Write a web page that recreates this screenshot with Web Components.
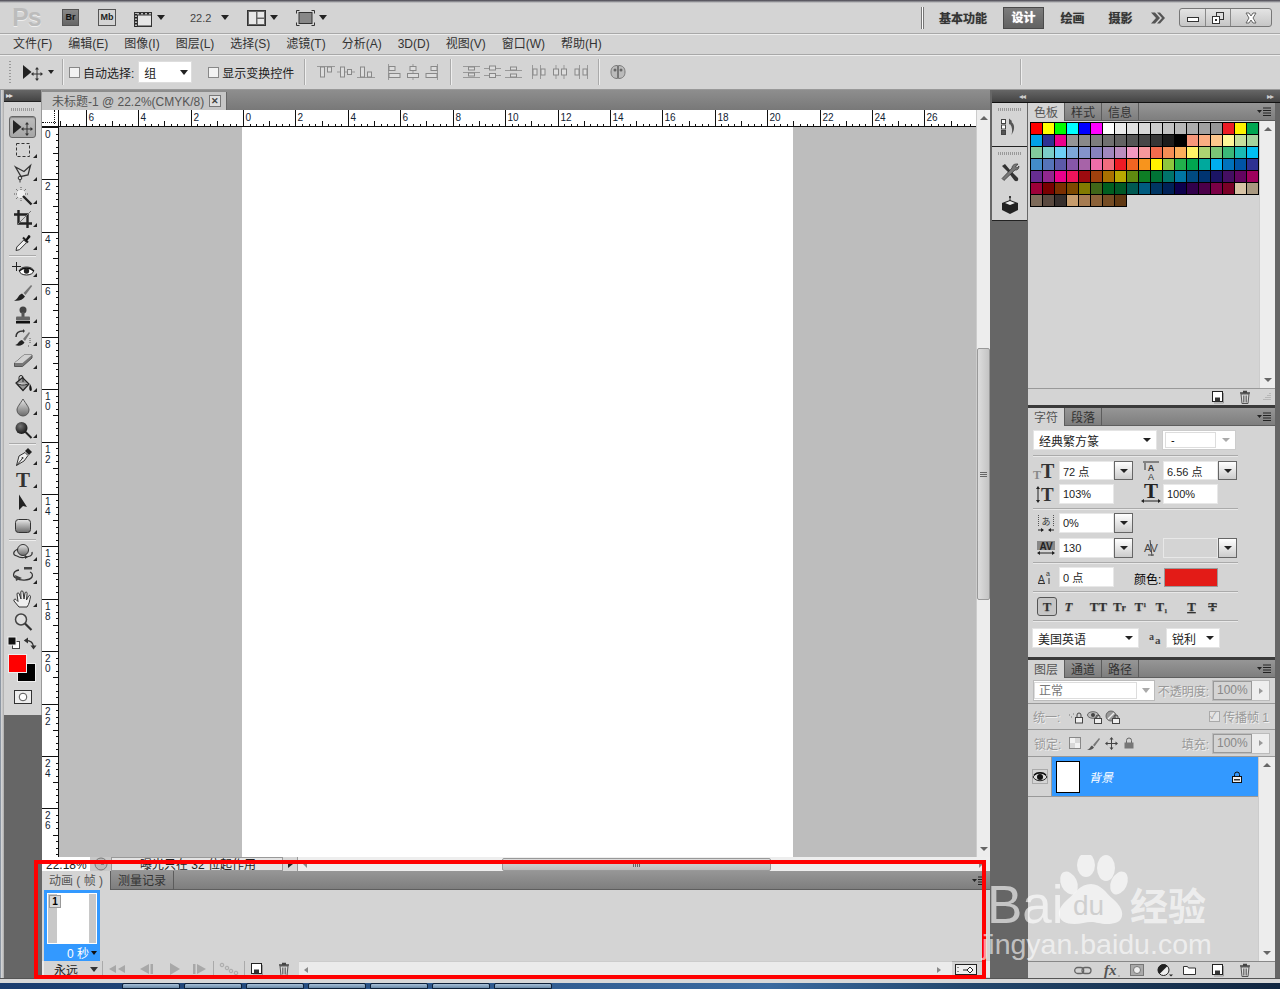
<!DOCTYPE html>
<html lang="zh"><head><meta charset="utf-8"><title>Photoshop</title>
<style>html,body{margin:0;padding:0;background:#d4d4d4}</style></head>
<body><ps-app></ps-app>
<script>
const S='fill="none" stroke="#333"';
const G='<defs><linearGradient id="g" x1="0" y1="0" x2="0" y2="1"><stop offset="0" stop-color="#e8e8e8"/><stop offset="1" stop-color="#6a6a6a"/></linearGradient><radialGradient id="d" cx=".4" cy=".35" r=".7"><stop offset="0" stop-color="#777"/><stop offset="1" stop-color="#111"/></radialGradient></defs>';
const AL='fill="#ddd" stroke="#888"';
const icons={
move:[24,16,'<path d="M2 1v14l8.500-7z" fill="#222"/><path d="M11 10h10M16 5v10" stroke="#333"/><path d="M16 3l2 2.500h-4zM16 17l2-2.500h-4zM10 10l2.500-2v4zM22 10l-2.500-2v4z" fill="#333"/>'],
marquee:[20,20,'<rect x="3.500" y="3.500" width="13" height="13" fill="none" stroke="#333" stroke-dasharray="3 2"/>'],
lasso:[20,20,`<path d="M2.500 4L11 8.500 17.500 2.500 15 12 8 13.500z" ${S} stroke-width="1.300"/><circle cx="7" cy="15" r="1.800" ${S}/><path d="M7 16.500v3" stroke="#333"/>`],
wand:[20,20,'<circle cx="8" cy="8" r="4" fill="#eee"/><path d="M8 1v3M8 12v3M1 8h3M12 8h3M3 3l2 2M13 3l-2 2M3 13l2-2" stroke="#555" stroke-dasharray="1 1"/><path d="M10 10l8.500 8.500" stroke="#222" stroke-width="2.400"/>'],
crop:[20,20,'<path d="M5.500 1v13.500H19M1 5.500h13.500V19" fill="none" stroke="#222" stroke-width="2.400"/><path d="M5 15L18 2" stroke="#777"/>'],
drop_:[20,20,'<path d="M3 18.500l.8-3.500 7-7 2.700 2.700-7 7z" fill="#eee" stroke="#333"/><path d="M10 5.500l5 5" stroke="#222" stroke-width="2"/><path d="M12.500 7.500l3-4.500a2 2 0 0 1 2 2l-4 4.500z" fill="#111"/>'],
eye3d:[24,16,'<path d="M5.500 1v9M1 5.500h9" stroke="#222"/><ellipse cx="15.500" cy="10" rx="7" ry="4" fill="#fff" stroke="#222"/><circle cx="15.500" cy="10" r="2.700" fill="#222"/><path d="M8 10q7.500-6 15 0" fill="none" stroke="#111" stroke-width="1.500"/>'],
brush:[20,20,'<path d="M1 18.500C5 17.500 5 13 9 11.500l3 3C10 18 5 19.500 1 18.500z" fill="#222"/><path d="M10.500 11L18 3l1.200 1L12.500 13z" fill="#777"/>'],
stamp:[20,20,'<circle cx="10" cy="5" r="3.500" fill="#444"/><rect x="8.500" y="7" width="3" height="5" fill="#555"/><rect x="3" y="11.500" width="14" height="4" rx="1" fill="#666"/><rect x="3" y="16" width="14" height="2.500" fill="#111"/>'],
hist:[20,20,'<path d="M2 17c3 0 3-4 7-5l2.500 2.500C10 17.500 6 18.500 2 17z" fill="#222"/><path d="M10 11l6-7 1 1-5 8z" fill="#777"/><path d="M3 9c0-4 3-6 7-6" fill="none" stroke="#333" stroke-width="1.500"/><path d="M10 1l2 2-2 2z" fill="#333"/><path d="M17 10v5M15 18h1" stroke="#555" stroke-dasharray="1 1"/>'],
eraser:[20,20,'<path d="M1.500 12L11 4h8v3l-9.500 8.500h-8z" fill="#777" stroke="#555"/><path d="M1.500 12L11 4h8L9.500 12z" fill="#d2d2d2"/>'],
fill:[20,20,'<path d="M3 9l6.500-5.500L16 10l-6 6.500z" fill="#999" stroke="#222" stroke-width="1.200"/><path d="M6 6.500V3.500a2 2 0 0 1 4 0V8" fill="none" stroke="#222"/><path d="M3 9c5 3 9 2 13 1" fill="#e5e5e5" stroke="#222"/><path d="M17 10c2 3 2.500 7 .7 7s-1.700-4-.7-7z" fill="#111"/>'],
drop:[20,20,G+'<path d="M10 2C7 7 4 10 4 13a6 6 0 0 0 12 0C16 10 13 7 10 2z" fill="url(#g)" stroke="#555"/>'],
burn:[20,20,G+'<circle cx="8.500" cy="8" r="6" fill="url(#d)"/><path d="M12.500 12l6 6" stroke="#222" stroke-width="2"/>'],
pen:[20,20,'<path d="M3.500 18.500L6 9l6-3.500 3 3L11 14z" fill="#eee" stroke="#333"/><path d="M12 4l3-3 4 4-3 3z" fill="#222"/><path d="M3.500 18.500L9 12" stroke="#333"/><circle cx="9.500" cy="11" r="1" fill="#333"/>'],
type:[20,20,'<text x="10" y="17" text-anchor="middle" font-family="Liberation Serif" font-weight="700" font-size="21" fill="#333">T</text>'],
arrow:[20,20,'<path d="M6 1.500v15.500l4-4 4 1z" fill="#222"/>'],
rrect:[20,20,G+'<rect x="2.500" y="3.500" width="15" height="13" rx="3" fill="url(#g)" stroke="#333"/>'],
rot3d:[22,20,G+'<circle cx="11" cy="7" r="5.500" fill="url(#g)" stroke="#333"/><path d="M6 6C1 8 0 12 5 13M12 14c5 0 9-1 8-5M5 13c3 2 6 2 9 1" fill="none" stroke="#333" stroke-width="1.200"/><path d="M13 12l3 2-3 2z" fill="#333"/>'],
orbit:[22,20,'<rect x="12" y="1" width="8" height="2.500" fill="#444"/><path d="M7 4C1 5 0 10 4 12c4 3 13 3 16-1 1-2 0-4-2-5" fill="none" stroke="#333" stroke-width="1.300"/><path d="M3 9l7 3-6 3z" fill="#444"/>'],
hand:[20,20,'<path d="M6 18c-2-2-3-4-5-6-.8-1.500 1-2.500 2-1.500l2 2L4 5c0-1.500 2-1.500 2.300 0L8 10 7.800 3c0-1.500 2.200-1.500 2.300 0l.9 7 1-6c.3-1.500 2.200-1.200 2.100.3L13.500 11l2-4c.7-1.200 2.300-.6 2 .7-1 4-1 7-3.500 10.300z" fill="#eee" stroke="#333" stroke-linejoin="round"/>'],
zoom:[20,20,'<circle cx="8" cy="7.500" r="5.500" fill="#e8e8e8" fill-opacity=".6" stroke="#444" stroke-width="1.500"/><path d="M12 11.500l6.500 6.500" stroke="#333" stroke-width="2.200"/>'],
defcol:[14,14,'<rect x="5.500" y="5.500" width="7" height="7" fill="#fff" stroke="#444"/><rect x="1" y="1" width="8" height="8" fill="#111" stroke="#eee"/>'],
swap:[14,14,'<path d="M3 4.500c4 0 7 2 7.500 6" fill="none" stroke="#333" stroke-width="1.400"/><path d="M5 1.500v6L.8 4.500zM7.500 9.500h6l-3 4z" fill="#333"/>'],
qmask:[18,14,'<rect x=".5" y=".5" width="17" height="13" fill="#eee" stroke="#333"/><circle cx="9" cy="7" r="3.800" fill="#fff" stroke="#555"/>'],
film:[18,18,'<rect x=".5" y="3.500" width="17" height="14" fill="#bbb" stroke="#333"/><rect x="3.500" y="6" width="14" height="11" fill="#e6e6e6" stroke="#333"/><path d="M2 5v13M6 4v2M10 4v2M14 4v2" stroke="#222" stroke-dasharray="1.500 1.500" stroke-width="2"/>'],
layout:[19,16,'<rect x=".5" y=".5" width="18" height="15" fill="#666" stroke="#333"/><rect x="2" y="2" width="7" height="12" fill="#e8e8e8"/><rect x="10.500" y="2" width="6.500" height="5.500" fill="#e8e8e8"/><rect x="10.500" y="9" width="6.500" height="5" fill="#e8e8e8"/>'],
screen:[19,16,'<path d="M.5 3.500v-3h3M15.500.5h3v3M18.500 12.500v3h-3M3.500 15.500h-3v-3" fill="none" stroke="#333"/><rect x="3" y="2.500" width="13" height="11" fill="#888" stroke="#333"/>'],
chev:[16,14,'<path d="M1 1.500l5 5.500-5 5.500h4l5-5.500L5 1.500zM7 1.500l5 5.500-5 5.500h3l5-5.500-5-5.500z" fill="#555"/>'],
winmin:[12,10,'<rect x=".5" y="4.500" width="11" height="4" fill="#fff" stroke="#333"/>'],
winres:[12,12,'<rect x="4.500" y=".5" width="7" height="7" fill="#ddd" stroke="#333"/><rect x=".5" y="4.500" width="7" height="7" fill="#fff" stroke="#333"/><rect x="3" y="7" width="2" height="2" fill="#333"/>'],
winx:[12,12,'<path d="M1 1h3l2 3 2-3h3L8 6l3 5H8L6 8l-2 3H1l3-5z" fill="#fff" stroke="#666"/>'],
a1:[18,14,`<path d="M0 1.500h18" stroke="#999"/><rect x="3.500" y="2" width="4" height="10" ${AL}/><rect x="10.500" y="2" width="4" height="5" ${AL}/>`],
a2:[18,14,`<path d="M0 7h18" stroke="#999"/><rect x="3.500" y="2" width="4" height="10" ${AL}/><rect x="10.500" y="4.500" width="4" height="5" ${AL}/>`],
a3:[18,14,`<path d="M0 12.500h18" stroke="#999"/><rect x="3.500" y="2" width="4" height="10" ${AL}/><rect x="10.500" y="7" width="4" height="5" ${AL}/>`],
a4:[14,16,`<path d="M1.500 0v16" stroke="#999"/><rect x="2" y="2.500" width="6" height="4" ${AL}/><rect x="2" y="9.500" width="11" height="4" ${AL}/>`],
a5:[14,16,`<path d="M7 0v16" stroke="#999"/><rect x="4" y="2.500" width="6" height="4" ${AL}/><rect x="1.500" y="9.500" width="11" height="4" ${AL}/>`],
a6:[14,16,`<path d="M12.500 0v16" stroke="#999"/><rect x="6" y="2.500" width="6" height="4" ${AL}/><rect x="1" y="9.500" width="11" height="4" ${AL}/>`],
d1:[17,14,`<path d="M0 1.500h17M0 7.500h17M0 12.500h17" stroke="#999"/><rect x="5.500" y="2" width="6" height="3" ${AL}/><rect x="5.500" y="8" width="6" height="3" ${AL}/>`],
d2:[17,14,`<path d="M0 3.500h17M0 10.500h17" stroke="#999"/><rect x="5.500" y="1" width="6" height="4" ${AL}/><rect x="5.500" y="8.500" width="6" height="4" ${AL}/>`],
d3:[17,14,`<path d="M0 5.500h17M0 12.500h17" stroke="#999"/><rect x="5.500" y="2" width="6" height="3" ${AL}/><rect x="5.500" y="9" width="6" height="3" ${AL}/>`],
d4:[16,14,`<path d="M1.500 0v14M9.500 0v14" stroke="#999"/><rect x="2" y="4" width="4" height="6" ${AL}/><rect x="10" y="4" width="4" height="6" ${AL}/>`],
d5:[16,14,`<path d="M4 0v14M12 0v14" stroke="#999"/><rect x="1.500" y="4" width="5" height="6" ${AL}/><rect x="9.500" y="4" width="5" height="6" ${AL}/>`],
d6:[16,14,`<path d="M6.500 0v14M14.500 0v14" stroke="#999"/><rect x="2" y="4" width="4" height="6" ${AL}/><rect x="10" y="4" width="4" height="6" ${AL}/>`],
autoal:[16,16,'<path d="M7.500 1.500C3 1.500 1 4 1 8s2 6.500 6.500 6.500zM8.500 1.500C13 1.500 15 4 15 8s-2 6.500-6.500 6.500z" fill="#bbb" stroke="#777"/><circle cx="5" cy="6" r="1.500" fill="#666"/><circle cx="11" cy="6" r="1.500" fill="#666"/>'],
history_:[20,20,'<rect x="1.500" y="2.500" width="4" height="4" fill="#fff" stroke="#444"/><rect x="1.500" y="8" width="4" height="4" fill="#fff" stroke="#444"/><rect x="1.500" y="13.500" width="4" height="4" fill="#555" stroke="#444"/><path d="M9 1.500l3 2.500-.5 1c3 2 3.500 7 1 11l-1 2c1-4 1-8-1.500-11L9 7.500z" fill="#555"/>'],
tools:[20,20,'<path d="M2 3l3-2 5 6 8 8c1 3-2 4-3.500 2.500L8 9z" fill="#333"/><path d="M18 1l-2.500 3 1.500 1 2-2c0 3-2 4.500-4 4L4 17.500 2 15.500 12 5c0-2.500 2-4.500 6-4z" fill="#777" stroke="#222" stroke-width=".6"/>'],
cube:[20,20,'<path d="M10 1v5" stroke="#222"/><circle cx="10" cy="2" r="1" fill="#222"/><path d="M2 8l8-3 8 3v7l-8 4-8-4z" fill="#222"/><path d="M5 8l5-2 5 2-5 2z" fill="#eee"/>'],
menu:[15,9,'<path d="M0 3h5L2.500 6z" fill="#222"/><path d="M6 1h8M6 3.500h8M6 6h8M6 8.500h8" stroke="#222"/>'],
newl:[12,12,'<rect x=".5" y=".5" width="10" height="10" fill="#fff" stroke="#222"/><path d="M3 6.500h5v4H3z" fill="#333"/><path d="M11.500 2v10H2" fill="none" stroke="#999"/>'],
trash:[12,14,'<path d="M2 4h8l-1 9.500H3z" fill="#ddd" stroke="#555"/><path d="M1 3h10M4 1.500h4" stroke="#444" stroke-width="1.400"/><path d="M4.500 5.500v7M7.500 5.500v7M6 5.500v7" stroke="#777"/>'],
grip:[12,10,'<path d="M11 1v1M9 3v1M11 3v1M7 5v1M9 5v1M11 5v1M5 7v1M7 7v1M9 7v1M11 7v1" stroke="#999"/>'],
link:[18,9,'<rect x=".7" y="1.500" width="9" height="6" rx="3" fill="none" stroke="#666" stroke-width="1.300"/><rect x="8" y="1.500" width="9" height="6" rx="3" fill="none" stroke="#666" stroke-width="1.300"/>'],
fx:[18,16,'<text x="1" y="13" font-family="Liberation Serif" font-style="italic" font-weight="700" font-size="15" fill="#555">fx</text><circle cx="16" cy="14" r=".7" fill="#777"/>'],
mask:[14,12,'<rect x=".5" y=".5" width="13" height="11" fill="#aaa" stroke="#777"/><circle cx="7" cy="6" r="3.500" fill="#eee" stroke="#777"/>'],
adj:[16,14,'<circle cx="6.500" cy="7" r="5.500" fill="#eee" stroke="#222"/><path d="M10.500 3L2.500 11a5.500 5.500 0 0 1 8-8z" fill="#222"/><path d="M12 11.500h4l-2 2z" fill="#222"/>'],
folder:[13,10,'<path d="M.5 1.500h4l1 1.500h7v6.500H.5z" fill="#fff" stroke="#333"/>'],
lock:[10,12,'<path d="M2.500 6V3.500a2.500 2.500 0 0 1 5 0V6" fill="none" stroke="#111"/><rect x=".5" y="5.500" width="9" height="6" fill="#eee" stroke="#111"/><rect x="2" y="8" width="6" height="1.500" fill="#333"/>'],
graylock:[10,12,'<path d="M2.500 6V3.500a2.500 2.500 0 0 1 5 0V6" fill="none" stroke="#666"/><rect x=".5" y="5.500" width="9" height="6" fill="#777"/>'],
eye:[14,10,'<path d="M0 5c3-5.500 11-5.500 14 0-3 5-11 5-14 0z" fill="#ddd" stroke="#222"/><circle cx="7" cy="5" r="3" fill="#111"/><path d="M1 3c3-3 9-3 12 0" fill="none" stroke="#111" stroke-width="1.400"/>'],
ulink:[15,14,'<path d="M0 5h1M2 7h1M4 4h1" stroke="#777"/><rect x="6.500" y="7.500" width="7" height="5.500" fill="#eee" stroke="#444"/><path d="M8 7.500V5a2 2 0 0 1 4 0v2.500" fill="none" stroke="#444"/>'],
ueye:[15,14,'<ellipse cx="6" cy="5" rx="5.500" ry="3.300" fill="#bbb" stroke="#666"/><circle cx="6" cy="5" r="2" fill="#444"/><rect x="7.500" y="8.500" width="7" height="5" fill="#eee" stroke="#444"/><path d="M9 8.500V7a2 2 0 0 1 4 0v1.500" fill="none" stroke="#444"/>'],
ustyle:[15,14,'<circle cx="6" cy="6" r="5" fill="#999" stroke="#666"/><path d="M3 9l6-6" stroke="#eee" stroke-width="1.500"/><rect x="7.500" y="8.500" width="7" height="5" fill="#eee" stroke="#444"/><path d="M9 8.500V7a2 2 0 0 1 4 0v1.500" fill="none" stroke="#444"/>'],
lchk:[12,12,'<rect x=".5" y=".5" width="11" height="11" fill="#d8d8d8" stroke="#888"/><path d="M1 1h5v5H1zM6 6h5v5H6z" fill="#f2f2f2"/>'],
lbrush:[13,13,'<path d="M0 12.500c3 0 3-3 5-4l2 2c-1.500 2-4 3-7 2z" fill="#555"/><path d="M6 8l6-7 1 1-5.500 7.500z" fill="#777"/>'],
lmove:[13,13,'<path d="M6.500 1v11M1 6.500h11" stroke="#444"/><path d="M6.500 0l2 2.500h-4zM6.500 13l2-2.500h-4zM0 6.500l2.500-2v4zM13 6.500l-2.500-2v4z" fill="#444"/>'],
first:[20,10,'<path d="M9 1v8L2 5zM18 1v8l-7-4z" fill="#a8a8a8"/>'],
prev:[18,10,'<path d="M12 0v10L3 5z" fill="#a8a8a8"/><path d="M13.500 0h2.500v10h-2.500z" fill="#a8a8a8"/>'],
play:[12,12,'<path d="M1 0v12l10-6z" fill="#a8a8a8"/>'],
next:[18,10,'<path d="M6 0v10l9-5z" fill="#a8a8a8"/><path d="M2 0h2.500v10H2z" fill="#a8a8a8"/>'],
tween:[18,12,'<circle cx="2" cy="2" r="1.800" fill="#ccc" stroke="#aaa"/><circle cx="7" cy="5" r="1.800" fill="#ccc" stroke="#aaa"/><circle cx="11" cy="8" r="1.800" fill="#ccc" stroke="#aaa"/><circle cx="16" cy="10" r="1.800" fill="#ccc" stroke="#aaa"/>'],
timeline:[22,11,'<rect x=".5" y=".5" width="21" height="10" fill="#eee" stroke="#222"/><path d="M3 3v1M3 7v1" stroke="#222"/><path d="M12 6l3-3 3 3-3 3z" fill="#fff" stroke="#222"/><path d="M8 6h4" stroke="#222"/>'],
clock:[14,14,'<circle cx="7" cy="7" r="6" fill="#bbb" stroke="#777"/><path d="M7 3v4h3" fill="none" stroke="#555"/>'],
tsize:[28,18,'<text x="1" y="17" font-family="Liberation Serif" font-weight="700" font-size="12" fill="#888">T</text><text x="9" y="16" font-family="Liberation Serif" font-weight="700" font-size="20" fill="#333">T</text>'],
tlead:[20,18,'<text x="10" y="9" text-anchor="middle" font-family="Liberation Sans" font-size="9" font-weight="700" fill="#333">A</text><text x="10" y="18" text-anchor="middle" font-family="Liberation Sans" font-size="9" fill="#333">A</text><path d="M2 0h16M4 1v7" stroke="#333"/>'],
tvs:[24,18,'<path d="M4 3v13" stroke="#222"/><path d="M4 1l2 3H2zM4 18l2-3H2z" fill="#222"/><text x="7" y="16" font-family="Liberation Serif" font-weight="700" font-size="19" fill="#333">T</text>'],
ths:[20,18,'<text x="10" y="13" text-anchor="middle" font-family="Liberation Serif" font-weight="700" font-size="21" fill="#222">T</text><path d="M2 16h16" stroke="#222"/><path d="M0 16l3-2v4zM20 16l-3-2v4z" fill="#222"/>'],
ttsu:[18,18,'<text x="9" y="11" text-anchor="middle" font-family="Noto Sans CJK JP" font-size="9" fill="#333">あ</text><path d="M1.500 1v11M16.500 1v11" stroke="#555" stroke-dasharray="1 1"/><path d="M1 16h5M12 16h5" stroke="#222"/><path d="M7 16l-3-2v4zM11 16l3-2v4z" fill="#222"/>'],
tav:[18,14,'<rect x="0" y="0" width="18" height="9" fill="#888"/><text x="9" y="9" text-anchor="middle" font-family="Liberation Sans" font-size="10" font-weight="700" fill="#222">AV</text><path d="M1 12h16" stroke="#222"/><path d="M0 12l3-2v4zM18 12l-3-2v4z" fill="#222"/>'],
tav2:[16,18,'<text x="8" y="13" text-anchor="middle" font-family="Liberation Sans" font-size="11" fill="#444">AV</text><path d="M7 1l2 16" stroke="#444"/><path d="M5 16h6" stroke="#444"/>'],
tbase:[16,14,'<text x="0" y="13" font-family="Liberation Sans" font-size="10" fill="#333">A</text><text x="8" y="6" font-family="Liberation Sans" font-size="7" fill="#333">a</text><path d="M11 8v6" stroke="#333"/><path d="M0 13.500h7" stroke="#333"/>'],
taa:[14,13,'<text x="0" y="8" font-family="Liberation Serif" font-size="10" font-weight="700" fill="#444">a</text><text x="6" y="12" font-family="Liberation Serif" font-size="11" font-weight="700" fill="#444">a</text>']
};
function def(name,css,html){customElements.define(name,class extends HTMLElement{connectedCallback(){if(this.shadowRoot)return;const r=this.attachShadow({mode:'open'});r.innerHTML='<style>'+css+'</style>'+(typeof html==='function'?html(this):html);}});}
const attr=(e,n,d='')=>e.hasAttribute(n)?e.getAttribute(n):d;

def('ps-icon',':host{display:inline-flex;line-height:0;flex:none}svg{display:block;overflow:visible}',e=>{const i=icons[attr(e,'name')]||[16,16,''];return `<svg width="${i[0]}" height="${i[1]}" viewBox="0 0 ${i[0]} ${i[1]}">${i[2]}</svg>`;});

def('ps-caret',':host{display:inline-block;flex:none;width:0;height:0;border-left:4px solid transparent;border-right:4px solid transparent;border-top:5px solid var(--c,#222)}','');

def('ps-appbar',`:host{display:flex;align-items:center;height:30px;box-sizing:border-box;padding-bottom:1px;background:#d4d4d4;color:#333}
.ps{font:700 25px "Liberation Sans",sans-serif;color:#bcbcbc;margin-left:12px;width:24px;letter-spacing:-1px;text-shadow:0 1px 0 #eee}
.br,.mb{box-sizing:border-box;width:17px;height:17px;font:700 9px/15px "Liberation Sans",sans-serif;text-align:center;border:1px solid #555}
.br{margin-left:26px;background:linear-gradient(#888,#666);color:#111}.mb{margin-left:19px;background:#d4d4d4;color:#222;width:18px}
.m{display:flex;align-items:center}.z{font-size:11px;color:#444}
.sp{flex:1}.dv{width:3px;height:22px;border-left:1px solid #777;border-right:1px solid #777;background:#fff;box-sizing:border-box}
.ws{font-weight:700;font-size:12px;color:#333;text-align:center;text-shadow:0 0 1px #777}
.act{background:linear-gradient(#7c7c7c,#626262);color:#fff;border:1px solid #4a4a4a;box-sizing:border-box;width:41px;height:22px;line-height:20px;text-shadow:0 0 1px #fff}
.win{display:flex;align-items:center;height:17px;margin-left:13px;margin-right:8px;border:1px solid #777;border-radius:3px;background:linear-gradient(#e4e4e4,#c6c6c6)}
.win span{display:flex;align-items:center;justify-content:center;height:100%;box-sizing:border-box}
.win span+span{border-left:1px solid #888}`,
`<span class="ps">Ps</span><span class="br">Br</span><span class="mb">Mb</span>
<span class="m" style="margin-left:18px;gap:5px"><ps-icon name="film"></ps-icon><ps-caret style="margin-left:0"></ps-caret></span>
<span class="z" style="margin-left:25px">22.2</span><ps-caret style="margin-left:10px"></ps-caret>
<span class="m" style="margin-left:18px;gap:4px"><ps-icon name="layout"></ps-icon><ps-caret></ps-caret></span>
<span class="m" style="margin-left:18px;gap:4px"><ps-icon name="screen"></ps-icon><ps-caret></ps-caret></span>
<span class="sp"></span><span class="dv"></span>
<span class="ws" style="margin-left:14px;width:50px">基本功能</span>
<span class="ws act" style="margin-left:15px">设计</span>
<span class="ws" style="margin-left:16px;width:25px">绘画</span>
<span class="ws" style="margin-left:23px;width:25px">摄影</span>
<span style="margin-left:17px;display:flex"><ps-icon name="chev"></ps-icon></span>
<span class="win"><span style="width:25px"><ps-icon name="winmin"></ps-icon></span><span style="width:25px"><ps-icon name="winres"></ps-icon></span><span style="width:41px"><ps-icon name="winx"></ps-icon></span></span>`);

def('ps-menubar',`:host{display:flex;align-items:baseline;gap:16px;height:22px;line-height:21px;padding-left:13px;border-top:1px solid #a8a8a8;border-bottom:1px solid #a8a8a8;box-sizing:border-box;box-shadow:inset 0 1px 0 #eee;font-size:12px;color:#333;white-space:nowrap}`,
['文件(F)','编辑(E)','图像(I)','图层(L)','选择(S)','滤镜(T)','分析(A)','3D(D)','视图(V)','窗口(W)','帮助(H)'].map(t=>`<span>${t}</span>`).join(''));

def('ps-optionsbar',`:host{display:flex;align-items:center;height:35px;box-sizing:border-box;border-bottom:1px solid #999;box-shadow:inset 0 1px 0 #eee;font-size:12px;color:#222;white-space:nowrap}
.grip{width:2px;height:22px;margin-left:9px;background:repeating-linear-gradient(#999 0 1px,transparent 1px 3px)}
.sep{width:1px;height:26px;background:#aaa;box-shadow:1px 0 0 #eee}
.cb{box-sizing:border-box;width:11px;height:11px;background:#f2f2f2;border:1px solid #888;flex:none}
.sel{box-sizing:border-box;display:flex;align-items:center;justify-content:space-between;width:54px;height:22px;background:#fff;border:1px solid #ddd;padding:0 3px 0 5px;margin-left:4px}
.g{display:flex;align-items:center}`,
`<span class="grip"></span><ps-icon name="move" style="margin-left:10px"></ps-icon><ps-caret style="margin-left:3px;border-top-width:4px;border-left-width:3px;border-right-width:3px"></ps-caret>
<span class="sep" style="margin-left:8px"></span><span class="cb" style="margin-left:6px"></span><span style="margin-left:3px">自动选择:</span>
<span class="sel"><span>组</span><ps-caret></ps-caret></span>
<span class="cb" style="margin-left:16px"></span><span style="margin-left:3px">显示变换控件</span>
<span class="sep" style="margin-left:10px"></span>
<span class="g" style="margin-left:12px;gap:2px"><ps-icon name="a1"></ps-icon><ps-icon name="a2"></ps-icon><ps-icon name="a3"></ps-icon></span>
<span class="g" style="margin-left:12px;gap:5px"><ps-icon name="a4"></ps-icon><ps-icon name="a5"></ps-icon><ps-icon name="a6"></ps-icon></span>
<span class="sep" style="margin-left:11px"></span>
<span class="g" style="margin-left:12px;gap:4px"><ps-icon name="d1"></ps-icon><ps-icon name="d2"></ps-icon><ps-icon name="d3"></ps-icon></span>
<span class="g" style="margin-left:9px;gap:5px"><ps-icon name="d4"></ps-icon><ps-icon name="d5"></ps-icon><ps-icon name="d6"></ps-icon></span>
<span class="sep" style="margin-left:9px"></span><ps-icon name="autoal" style="margin-left:11px"></ps-icon>
<span class="sep" style="margin-left:auto;margin-right:259px"></span>`);

def('ps-tool',`:host{display:flex;align-items:center;justify-content:center;height:23px;box-sizing:border-box;position:relative}
:host([active]){margin:0 5px;height:22px;background:linear-gradient(#bcbcbc,#a6a6a6);border:1px solid #666;border-radius:3px;box-shadow:inset 0 1px 1px #888}
.tri{position:absolute;right:4px;bottom:3px;width:0;height:0;border-left:4px solid transparent;border-bottom:4px solid #222}`,
e=>`<ps-icon name="${attr(e,'icon')}"></ps-icon>${e.hasAttribute('notri')?'':'<span class="tri"></span>'}`);

def('ps-toolbar',`:host{display:flex;flex-direction:column;width:37px;background:#d4d4d4;height:625px;border-right:1px solid #999;box-sizing:content-box}
.head{height:12px;background:linear-gradient(#666,#444);color:#ddd;font:8px/12px "Liberation Sans",sans-serif;padding-left:2px;letter-spacing:-1px;border-bottom:1px solid #222;box-sizing:border-box}
.grip{height:14px;display:flex;align-items:center;justify-content:center}.grip i{display:block;width:24px;height:3px;background:repeating-linear-gradient(90deg,#999 0 1px,transparent 1px 2px)}
.sep{height:1px;background:#aaa;margin:2px 5px 1px;box-shadow:0 1px 0 #eee}
.col{display:flex;align-items:center;justify-content:space-between;height:14px;margin:3px 4px 4px 3px}
.sw{position:relative;height:30px;margin:0 4px}
.fg,.bg{position:absolute;width:19px;height:19px;box-sizing:border-box;border:1px solid #eee}
.fg{left:0;top:0;background:#f00;z-index:1}.bg{left:9px;top:9px;background:#000}
.qm{display:flex;justify-content:center;margin-top:6px}`,
()=>{const t=(a,n)=>`<ps-tool icon="${a}"${n?' notri':''}></ps-tool>`;
return `<div class="head">▸▸</div><div class="grip"><i></i></div>
<ps-tool icon="move" active notri></ps-tool>${t('marquee')}${t('lasso')}${t('wand')}${t('crop')}${t('drop_')}<div class="sep"></div>
${t('eye3d')}${t('brush')}${t('stamp')}${t('hist')}${t('eraser')}${t('fill')}${t('drop')}${t('burn')}<div class="sep"></div>
${t('pen')}${t('type')}${t('arrow')}${t('rrect')}<div class="sep"></div>
${t('rot3d')}${t('orbit')}${t('hand')}${t('zoom',1)}
<div class="col"><ps-icon name="defcol"></ps-icon><ps-icon name="swap"></ps-icon></div>
<div class="sw"><span class="fg"></span><span class="bg"></span></div>
<div class="qm"><ps-icon name="qmask"></ps-icon></div>`});

def('ps-ruler',`:host{display:block;background:#fff;overflow:hidden}svg{display:block}text{font:10px "Liberation Sans",sans-serif;fill:#123}`,
e=>{const len=+attr(e,'len'),o=+attr(e,'origin'),step=52.42,v=e.hasAttribute('vertical');let p='',t='';
for(let k=-6;k<20;k++){const lab=String(Math.abs(k)*2);for(let s=0;s<8;s++){const a=Math.round(o+k*step+s*step/8)+.5;if(a<0||a>len)continue;const l=s==0?17:s==4?6:3;
p+=v?`M${17-l} ${a}H17`:`M${a} ${17-l}V17`;}
const a=Math.round(o+k*step)+.5;if(a<0||a>len)continue;
if(v){[...lab].forEach((c,i)=>t+=`<text x="3" y="${a+10+i*10.5}">${c}</text>`);}else t+=`<text x="${a+2}" y="11">${lab}</text>`;}
return v?`<svg width="17" height="${len}"><path d="${p}M16.500 0V${len}" stroke="#111" fill="none"/>${t}</svg>`:`<svg width="${len}" height="17"><path d="${p}M0 16.500H${len}" stroke="#111" fill="none"/>${t}</svg>`;});

def('ps-vscroll',`:host{display:flex;flex-direction:column;align-items:center;background:#ededed;width:15px;box-sizing:border-box;border-left:1px solid #ccc;position:relative}
.u,.d{width:0;height:0;border-left:4px solid transparent;border-right:4px solid transparent}
.u{border-bottom:4px solid #666;margin-top:6px}.d{border-top:4px solid #666;margin-bottom:6px}
.th{box-sizing:border-box;width:100%;background:linear-gradient(90deg,#ddd,#c4c4c4);border:1px solid #999;border-radius:2px;display:flex;align-items:center;justify-content:center}
.th i{display:block;width:7px;height:5px;background:repeating-linear-gradient(#666 0 1px,transparent 1px 2px)}
.sp{flex:1}`,
e=>`<span class="u"></span><span style="height:${attr(e,'before','0')}px"></span>${e.hasAttribute('thumb')?`<span class="th" style="height:${attr(e,'thumb')}px"><i></i></span>`:''}<span class="sp"></span><span class="d"></span>`);

def('ps-tabbar',`:host{display:flex;align-items:flex-end;height:var(--h,18px);background:linear-gradient(#969696,#7e7e7e);border-bottom:1px solid #5e5e5e;box-sizing:border-box;font-size:12px;color:#333;position:relative}
.t{box-sizing:border-box;display:flex;align-items:center;justify-content:center;height:calc(100% + 1px);margin-bottom:-1px;border-right:1px solid #5c5c5c;padding:0 var(--pad,6px) 2px;white-space:nowrap;color:#333}
.a{background:#d4d4d4;color:#555}
.m{margin-left:auto;margin-right:3px;align-self:center;display:flex}`,
e=>attr(e,'tabs').split(',').map((t,i)=>`<span class="t${i==0?' a':''}">${t}</span>`).join('')+'<span class="m"><ps-icon name="menu"></ps-icon></span>');

def('ps-status',`:host{display:flex;height:14px;align-items:flex-start;background:#e8e8e8;font-size:12px;color:#222;white-space:nowrap;overflow:hidden;position:relative}
.z{width:48px;background:#fff;height:100%;padding-left:4px;box-sizing:border-box;line-height:17px;font-size:12px}
.i{width:21px;display:flex;align-items:center;justify-content:center;background:#c8c8c8;height:100%}
.t{width:172px;box-sizing:border-box;padding-left:28px;border:1px solid #999;height:100%;line-height:14px;background:#e4e4e4}
.a{width:15px;height:100%;display:flex;align-items:center;justify-content:center;background:#d8d8d8;border-right:1px solid #999;box-sizing:border-box}
.tr{flex:1;display:flex;height:100%;background:#eee;align-items:center}
.l,.r{width:0;height:0;border-top:4px solid transparent;border-bottom:4px solid transparent}
.l{border-right:4px solid #888;margin-left:5px}.r{border-left:4px solid #888;margin-right:7px}
.th{box-sizing:border-box;margin-left:195px;width:269px;height:13px;background:linear-gradient(#dcdcdc,#bcbcbc);border:1px solid #999;border-radius:2px;display:flex;align-items:center;justify-content:center}
.th i{display:block;width:7px;height:5px;background:repeating-linear-gradient(90deg,#666 0 1px,transparent 1px 2px)}`,
`<span class="z">22.18%</span><span class="i"><ps-icon name="clock"></ps-icon></span><span class="t">曝光只在 32 位起作用</span><span class="a"><ps-caret style="border-top:4px solid transparent;border-bottom:4px solid transparent;border-left:5px solid #222;border-right:0"></ps-caret></span>
<span class="tr"><span class="l"></span><span class="th"><i></i></span><span style="flex:1"></span><span class="r"></span></span>`);

def('ps-frame',`:host{display:block;width:56px;background:#39f;flex:none;height:71px;box-sizing:border-box;padding:3px 3px 0;position:relative;color:#fff;font-size:12px}
.b{box-sizing:border-box;height:51px;border:1px solid #fff;background:#c8c8c8;display:flex;justify-content:center;position:relative}
.p{width:32px;background:#fff;margin-left:2px}
.n{position:absolute;left:1px;top:1px;width:12px;height:13px;background:#d8d8d8;border:1px solid #999;box-sizing:border-box;color:#000;font:700 10px/11px "Liberation Sans",sans-serif;text-align:center}
.c{display:flex;justify-content:flex-end;align-items:center;height:17px;gap:2px}`,
`<div class="b"><span class="p"></span><span class="n">1</span></div><div class="c"><span>0 秒</span><ps-caret style="--c:#111;border-top-width:4px;border-left-width:3px;border-right-width:3px"></ps-caret></div>`);

def('ps-anim',`:host{display:flex;flex-direction:column;background:#d4d4d4;font-size:12px;color:#222}
.body{height:71px;display:flex;padding-left:2px}
.bar{display:flex;align-items:center;height:16px;background:#ebebeb}
.lp{box-sizing:border-box;width:58px;margin-left:2px;display:flex;justify-content:space-between;align-items:center;background:#d4d4d4;height:100%;padding:0 4px 0 10px}
.c{display:flex;align-items:center;justify-content:center;height:100%;background:#d4d4d4;border-left:1px solid #aaa;box-sizing:border-box}
.tr{flex:1;display:flex;align-items:center;justify-content:space-between;height:100%;padding:0 11px 0 5px;border-top:1px solid #ccc;box-sizing:border-box}
.l,.r{width:0;height:0;border-top:3px solid transparent;border-bottom:3px solid transparent}.l{border-right:4px solid #888}.r{border-left:4px solid #888}`,
`<ps-tabbar tabs="动画 ( 帧 ),测量记录" style="--h:19px;--pad:7px"></ps-tabbar>
<div class="body"><ps-frame></ps-frame></div>
<div class="bar"><span class="lp"><span>永远</span><ps-caret style="--c:#333"></ps-caret></span>
<span class="c" style="width:28px;justify-content:flex-start;padding-left:4px"><ps-icon name="first"></ps-icon></span><span class="c" style="width:32px;border:0"><ps-icon name="prev"></ps-icon></span><span class="c" style="width:25px;border:0"><ps-icon name="play"></ps-icon></span><span class="c" style="width:26px;border:0"><ps-icon name="next"></ps-icon></span>
<span class="c" style="width:31px"><ps-icon name="tween"></ps-icon></span><span class="c" style="width:25px"><ps-icon name="newl"></ps-icon></span><span class="c" style="width:30px;border:0"><ps-icon name="trash"></ps-icon></span>
<span class="tr"><span class="l"></span><span class="r"></span></span>
<span class="c" style="width:30px;border:0;border-top:1px solid #aaa;justify-content:flex-start;padding-left:3px"><ps-icon name="timeline"></ps-icon></span><span style="width:8px"></span></div>`);

def('ps-doc',`:host{display:flex;flex-direction:column;width:948px;height:888px;background:#d4d4d4}
.tabs{height:20px;background:linear-gradient(#8e8e8e,#787878);display:flex;align-items:flex-end;flex:none}
.tab{box-sizing:border-box;width:185px;height:18px;background:#c6c6c6;border-right:1px solid #666;display:flex;align-items:center;padding:0 5px 1px 10px;font-size:12px;color:#555;white-space:nowrap;justify-content:space-between}
.x{box-sizing:border-box;width:12px;height:12px;border:1px solid #777;background:#e0e0e0;font:700 9px/10px "Liberation Sans",sans-serif;text-align:center;color:#444}
.main{flex:1;display:grid;grid-template-columns:17px 917px 14px;grid-template-rows:17px 1fr;min-height:0}
.corner{background:#fff;border-bottom:1px solid #111;border-right:1px solid #111;box-sizing:border-box;position:relative}
.corner i{position:absolute;left:0;top:12px;width:14px;border-top:1px dotted #111}.corner b{position:absolute;left:12px;top:0;height:14px;border-left:1px dotted #111}
.cv{background:#bdbdbd;display:flex;justify-content:center;min-height:0}.page{width:551px;background:#fff}
ps-vscroll{grid-row:1/3;grid-column:3;width:14px}`,
`<div class="tabs"><div class="tab"><span>未标题-1 @ 22.2%(CMYK/8)</span><span class="x">✕</span></div></div>
<div class="main"><div class="corner"><i></i><b></b></div><ps-ruler len="917" origin="184"></ps-ruler><ps-vscroll before="228" thumb="252"></ps-vscroll>
<ps-ruler vertical len="730" origin="0"></ps-ruler><div class="cv"><div class="page"></div></div></div>
<ps-status></ps-status><ps-anim></ps-anim><div style="height:1px"></div>`);

const sw=['f00 ff0 0f0 0ff 00f f0f fff ebebeb e1e1e1 d7d7d7 ccc c2c2c2 b7b7b7 acacac a1a1a1 969696 ed1c24 fff200 00a651',
'00a2e8 2e3192 ec008c 959595 898989 7d7d7d 707070 626262 555 464646 363636 1c1c1c 000 f7977a fbad82 fdc68c fff799 c6df9c a4d49d',
'82ca9c 7bcdc8 6ecff6 7ea7d8 8493ca 8882be a187be bc8dbf f49ac2 f6989d f16c4d f68e55 fbaf5c fff467 acd372 7cc576 3bb878 1abbb4 00bff3',
'438cca 5574b9 5c5aa8 8757a8 a763a8 ef6ea8 f16d7e ee1c25 f26522 f7941d fff100 8fc63d 22b14c 00a650 00a99d 00aeef 0072bc 0054a6 2e3192',
'662d91 92278f ec008c ed145b 9e0b0f a0410d aa7100 b8a900 5f8a10 0e7e25 007236 00746b 0076a3 004a80 003471 1b1464 440e62 630460 9e005d',
'9e0039 790000 7b2e00 7d4900 827b00 406618 005e20 005826 005952 005b7f 003663 002157 0d004c 32004b 4b0049 7b0046 7a0026 d7c3a6 a89880',
'7e6b5a 59493f 362f2d c69c6d a67c52 8c6239 754c24 603913'];
def('ps-swatches',`:host{display:flex;flex-direction:column;height:302px;background:#d4d4d4}
.m{flex:1;display:flex;min-height:0}.g{width:229px;padding:1px 0 0 2px;flex:none}
ps-vscroll{margin-left:auto;width:16px}
.b{height:17px;display:flex;align-items:center;justify-content:flex-end;border-top:1px solid #999;box-sizing:border-box;padding-right:4px}
.g2{display:grid;grid-template-columns:repeat(19,12px);grid-auto-rows:12px}
.g2 i{display:block;box-sizing:border-box;border:1px solid #000;margin:0 -1px -1px 0}`,
()=>`<ps-tabbar tabs="色板,样式,信息"></ps-tabbar><div class="m"><div class="g"><div class="g2">${sw.join(' ').split(' ').map(c=>`<i style="background:#${c}"></i>`).join('')}</div></div><ps-vscroll></ps-vscroll></div>
<div class="b"><ps-icon name="newl"></ps-icon><ps-icon name="trash" style="margin-left:15px"></ps-icon><ps-icon name="grip" style="margin-left:8px"></ps-icon></div>`);

def('ps-field',`:host{display:flex;box-sizing:border-box;height:100%;font-size:11px;color:#222}
.v{flex:1;box-sizing:border-box;background:#fff;border:1px solid #e8e8e8;padding-left:3px;display:flex;align-items:center;white-space:nowrap;min-width:0}
:host([off]) .v{background:#d4d4d4}
.d{box-sizing:border-box;width:19px;flex:none;background:linear-gradient(#fff,#ccc);border:1px solid #666;display:flex;align-items:center;justify-content:center}`,
e=>`<span class="v">${attr(e,'value')}</span>${e.hasAttribute('dd')?'<span class="d"><ps-caret style="border-top-width:4px"></ps-caret></span>':''}`);

def('ps-select',`:host{display:flex;box-sizing:border-box;height:100%;background:#fff;align-items:center;justify-content:space-between;padding:0 5px;font-size:12px;color:#222;border:1px solid #e4e4e4;white-space:nowrap}`,
e=>`<span>${attr(e,'value')}</span><ps-caret style="border-top-width:4px"></ps-caret>`);

def('ps-char',`:host{display:flex;flex-direction:column;height:249px;background:#d4d4d4;font-size:12px}
.c{padding-left:5px}
.r{display:grid;grid-template-columns:26px 74px 5px 25px 74px;align-items:stretch}
.r>.i{display:flex;align-items:center;justify-content:center}
.s{height:1px;background:#aaa;margin-left:5px;width:205px;box-shadow:0 1px 0 #e8e8e8}
.nd{width:55px}.f{display:flex}
.st{display:flex;align-items:center;font:700 13px "Liberation Serif",serif;color:#333;height:19px;margin-left:9px}
.st span{display:inline-block;text-align:center;width:21px;line-height:17px;text-shadow:0 1px 1px #999}
.on{box-sizing:border-box;height:19px;border:1px solid #555;border-radius:3px;background:#c6c6c6}
sub,sup{font-size:7px;line-height:0}sup{vertical-align:4px}sub{vertical-align:-2px}`,
`<ps-tabbar tabs="字符,段落"></ps-tabbar>
<div class="f" style="margin:4px 0 0 5px;height:20px"><ps-select value="经典繁方篆" style="width:124px"></ps-select>
<span style="margin-left:5px;width:74px;box-sizing:border-box;background:#fff;display:flex;align-items:center;justify-content:space-between;padding:0 5px 0 2px;border:1px solid #ccc;font-size:11px"><span style="border:1px solid #ddd;flex:1;height:14px;padding-left:5px;line-height:14px">-</span><ps-caret style="--c:#aaa;margin-left:6px;border-top-width:4px"></ps-caret></span></div>
<div class="s" style="margin-top:5px"></div>
<div class="r c" style="margin-top:5px;height:19px"><span class="i"><ps-icon name="tsize"></ps-icon></span><ps-field value="72 点" dd></ps-field><i></i><span class="i"><ps-icon name="tlead"></ps-icon></span><ps-field value="6.56 点" dd></ps-field></div>
<div class="r c" style="margin-top:4px;height:20px"><span class="i"><ps-icon name="tvs"></ps-icon></span><ps-field class="nd" value="103%"></ps-field><i></i><span class="i"><ps-icon name="ths"></ps-icon></span><ps-field class="nd" value="100%"></ps-field></div>
<div class="s" style="margin-top:4px"></div>
<div class="r c" style="margin-top:4px;height:20px"><span class="i"><ps-icon name="ttsu"></ps-icon></span><ps-field value="0%" dd></ps-field></div>
<div class="r c" style="margin-top:5px;height:20px"><span class="i"><ps-icon name="tav"></ps-icon></span><ps-field value="130" dd></ps-field><i></i><span class="i"><ps-icon name="tav2"></ps-icon></span><ps-field value="" off dd></ps-field></div>
<div class="s" style="margin-top:4px"></div>
<div class="r c" style="margin-top:4px;height:19px"><span class="i"><ps-icon name="tbase"></ps-icon></span><ps-field class="nd" value="0 点"></ps-field><i></i><span style="grid-column:4/6;display:flex;align-items:center;margin-left:-4px"><span style="width:30px;margin-top:3px;white-space:nowrap">颜色:</span><span style="width:54px;height:19px;background:#e31b17;border:1px solid #999;box-sizing:border-box"></span></span></div>
<div class="s" style="margin-top:5px"></div>
<div class="st" style="margin-top:5px"><span class="on" style="width:20px">T</span><span style="margin-left:1px;font-style:italic">T</span><span style="margin-left:9px">TT</span><span>T<small style="font-size:10px">r</small></span><span>T<sup>1</sup></span><span>T<sub>1</sub></span><span style="margin-left:9px;text-decoration:underline">T</span><span style="text-decoration:line-through">T</span></div>
<div class="s" style="margin-top:4px"></div>
<div class="f" style="margin:7px 0 0 4px;height:20px;align-items:center"><ps-select value="美国英语" style="width:107px"></ps-select><ps-icon name="taa" style="margin:0 3px 0 10px"></ps-icon><ps-select value="锐利" style="width:54px"></ps-select></div>`);

def('ps-num',`:host{display:flex;box-sizing:border-box;width:58px;height:21px;border:1px solid #bbb;background:#eee;font-size:12px;color:#888}
.v{flex:1;box-sizing:border-box;background:#d4d4d4;border:1px solid #999;padding-left:3px;line-height:17px}.a{width:17px;display:flex;align-items:center;justify-content:center}
.a i{display:block;width:0;height:0;border-top:3px solid transparent;border-bottom:3px solid transparent;border-left:4px solid #999}`,
`<span class="v">100%</span><span class="a"><i></i></span>`);

def('ps-layers',`:host{display:flex;flex-direction:column;height:318px;background:#d4d4d4;font-size:12px;color:#999}
.lb{text-shadow:1px 1px 0 #f0f0f0;white-space:nowrap}
.r{display:flex;align-items:center;box-sizing:border-box;border-bottom:1px solid #999}
.bs{box-sizing:border-box;width:122px;height:21px;margin-left:5px;display:flex;background:#fff;border:1px solid #bbb;align-items:center;justify-content:space-between;padding-right:4px;color:#777}
.bs span{box-sizing:border-box;flex:1;border:1px solid #ddd;height:17px;line-height:16px;padding-left:4px;margin-right:5px;background:#fff}
.list{flex:1;display:flex;min-height:0}.lw{flex:1;min-width:0}
.ly{display:flex;height:40px;border-bottom:1px solid #999;box-sizing:border-box}
.ey{box-sizing:border-box;width:24px;display:flex;align-items:center;justify-content:center;border-right:1px solid #999}
.ey b{display:flex;align-items:center;justify-content:center;width:16px;height:15px;border:1px solid #aaa;box-sizing:border-box}
.sel{flex:1;background:#39f;display:flex;align-items:center;color:#fff}
.th{box-sizing:border-box;width:24px;height:32px;background:#fff;border:1px solid #000;margin-left:4px}
.nm{margin-left:9px;font-style:italic;width:143px}
ps-vscroll{width:17px;flex:none}
.bb{height:17px;box-sizing:border-box;border-top:1px solid #888;display:flex;align-items:center}`,
`<ps-tabbar tabs="图层,通道,路径"></ps-tabbar>
<div class="r" style="height:26px"><span class="bs"><span>正常</span><ps-caret style="--c:#aaa"></ps-caret></span><span class="lb" style="margin-left:auto">不透明度:</span><ps-num style="margin:0 5px 0 3px"></ps-num></div>
<div class="r" style="height:26px;padding-left:5px"><span class="lb">统一:</span><ps-icon name="ulink" style="margin-left:9px"></ps-icon><ps-icon name="ueye" style="margin-left:3px"></ps-icon><ps-icon name="ustyle" style="margin-left:3px"></ps-icon>
<span style="box-sizing:border-box;margin-left:auto;width:11px;height:11px;border:1px solid #aaa;background:#e4e4e4;color:#999;font-size:9px;line-height:9px">✓</span><span class="lb" style="margin:0 6px 0 3px">传播帧 1</span></div>
<div class="r" style="height:27px;padding-left:6px"><span class="lb">锁定:</span><ps-icon name="lchk" style="margin-left:8px"></ps-icon><ps-icon name="lbrush" style="margin-left:6px"></ps-icon><ps-icon name="lmove" style="margin-left:5px"></ps-icon><ps-icon name="graylock" style="margin-left:6px"></ps-icon><span class="lb" style="margin-left:auto">填充:</span><ps-num style="margin:0 5px 0 3px"></ps-num></div>
<div class="list"><div class="lw"><div class="ly"><span class="ey"><b><ps-icon name="eye"></ps-icon></b></span><div class="sel"><span class="th"></span><span class="nm">背景</span><ps-icon name="lock"></ps-icon></div></div></div><ps-vscroll></ps-vscroll></div>
<div class="bb"><ps-icon name="link" style="margin-left:46px"></ps-icon><ps-icon name="fx" style="margin-left:11px"></ps-icon><ps-icon name="mask" style="margin-left:9px"></ps-icon><ps-icon name="adj" style="margin-left:13px"></ps-icon><ps-icon name="folder" style="margin-left:10px"></ps-icon><ps-icon name="newl" style="margin-left:16px"></ps-icon><ps-icon name="trash" style="margin-left:15px"></ps-icon></div>`);

def('ps-dock',`:host{display:flex;flex-direction:column;width:36px;background:#666;height:875px}
.g{background:#d4d4d4;border-bottom:1px solid #222;box-sizing:border-box;display:flex;flex-direction:column;align-items:center;margin-right:1px}
.gr{width:24px;height:3px;margin-top:5px;background:repeating-linear-gradient(90deg,#999 0 1px,transparent 1px 2px)}`,
`<div class="g" style="height:44px"><span class="gr"></span><ps-icon name="history_" style="margin-top:6px"></ps-icon></div>
<div class="g" style="height:74px"><span class="gr"></span><ps-icon name="tools" style="margin-top:8px"></ps-icon><ps-icon name="cube" style="margin-top:12px"></ps-icon></div>`);

def('ps-right',`:host{display:flex;flex-direction:column;width:288px;height:888px;background:#333}
.h{height:13px;background:linear-gradient(#666,#444);border-bottom:1px solid #111;box-sizing:border-box;display:flex;align-items:center;justify-content:space-between;color:#ccc;font:8px "Liberation Sans",sans-serif;padding:0 7px 0 27px;letter-spacing:-1px}
.b{flex:1;display:flex}.p{width:247px;display:flex;flex-direction:column;gap:3px;background:#3a3a3a}
.e{flex:1;background:#666}`,
`<div class="h"><span>◂◂</span><span>▸▸</span></div><div class="b"><ps-dock></ps-dock><div class="p"><ps-swatches></ps-swatches><ps-char></ps-char><ps-layers></ps-layers></div><div class="e"></div></div>`);

def('ps-watermark',`:host{display:block;position:absolute;left:985px;top:855px;width:228px;height:110px;pointer-events:none;color:rgba(255,255,255,.62);font-family:"Liberation Sans",sans-serif}
span{position:absolute;white-space:nowrap}svg{position:absolute;left:0;top:0}
.du{color:#cfcfcf}`,
`<svg width="228" height="110"><g fill="rgba(245,245,245,.85)"><ellipse cx="101" cy="10" rx="9" ry="12"/><ellipse cx="121" cy="13" rx="9" ry="13"/><ellipse cx="84" cy="28" rx="8" ry="12" transform="rotate(-25 84 28)"/><ellipse cx="134" cy="28" rx="8" ry="12" transform="rotate(25 134 28)"/><path d="M106 29c10 0 15 9 22 15 7 6 10 12 9 17-1 6-7 8-15 8-7 0-11-2-16-2s-10 2-17 2c-8 0-14-3-15-9-1-5 3-11 9-16 7-6 12-15 23-15z"/></g></svg>
<span style="left:2px;top:29px;font-size:53px;line-height:42px">Bai</span>
<span class="du" style="left:88px;top:37px;font-size:28px;line-height:28px">du</span>
<span style="left:145px;top:28px;font-size:38px;line-height:42px;font-weight:700;font-family:'Noto Sans CJK SC',sans-serif">经验</span>
<span style="left:-3px;top:74px;font-size:28.500px;line-height:30px">jingyan.baidu.com</span>`);

def('ps-taskbar',`:host{display:flex;height:6px;background:linear-gradient(90deg,#1a3c6e,#3a6aa0 60%,#24486e 75%,#10253f);overflow:hidden;gap:4px;padding-left:122px;box-sizing:border-box}
i{display:block;height:6px;width:58px;flex:none;background:linear-gradient(#a8c0d8,#6a8aa8);border:1px solid #0d2038;box-sizing:border-box;border-radius:2px 2px 0 0}`,
`<i></i><i></i><i></i><i></i><i></i><i></i><i></i>`);

def('ps-app',`:host{display:block;position:relative;width:1280px;height:989px;overflow:hidden;background:#d4d4d4;font-family:"Liberation Sans","Noto Sans CJK SC",sans-serif;font-size:12px}
.top{height:3px;background:linear-gradient(#44414c,#8a8a90 50%,#d4d4d4)}
.ws{display:flex;height:888px;background:#666}
.l{width:42px;flex:none;display:flex;background:#666}
.e{width:4px;flex:none;background:linear-gradient(90deg,#6c7a8c,#d8d8d8 40%,#aaa)}
.gap{width:2px;background:#666;flex:none}
.bot{height:5px;background:#d8d8d8;border-top:1px solid #555;box-sizing:border-box}
.red{position:absolute;left:34px;top:860px;width:952px;height:119px;box-sizing:border-box;border:4px solid #f00;pointer-events:none}`,
`<div class="top"></div><ps-appbar></ps-appbar><ps-menubar></ps-menubar><ps-optionsbar></ps-optionsbar>
<div class="ws"><div class="l"><span class="e"></span><div style="background:#666"><ps-toolbar></ps-toolbar></div></div><ps-doc></ps-doc><span class="gap"></span><ps-right></ps-right></div>
<div class="bot"></div><ps-taskbar></ps-taskbar><div class="red"></div><ps-watermark></ps-watermark>`);
</script></body></html>
